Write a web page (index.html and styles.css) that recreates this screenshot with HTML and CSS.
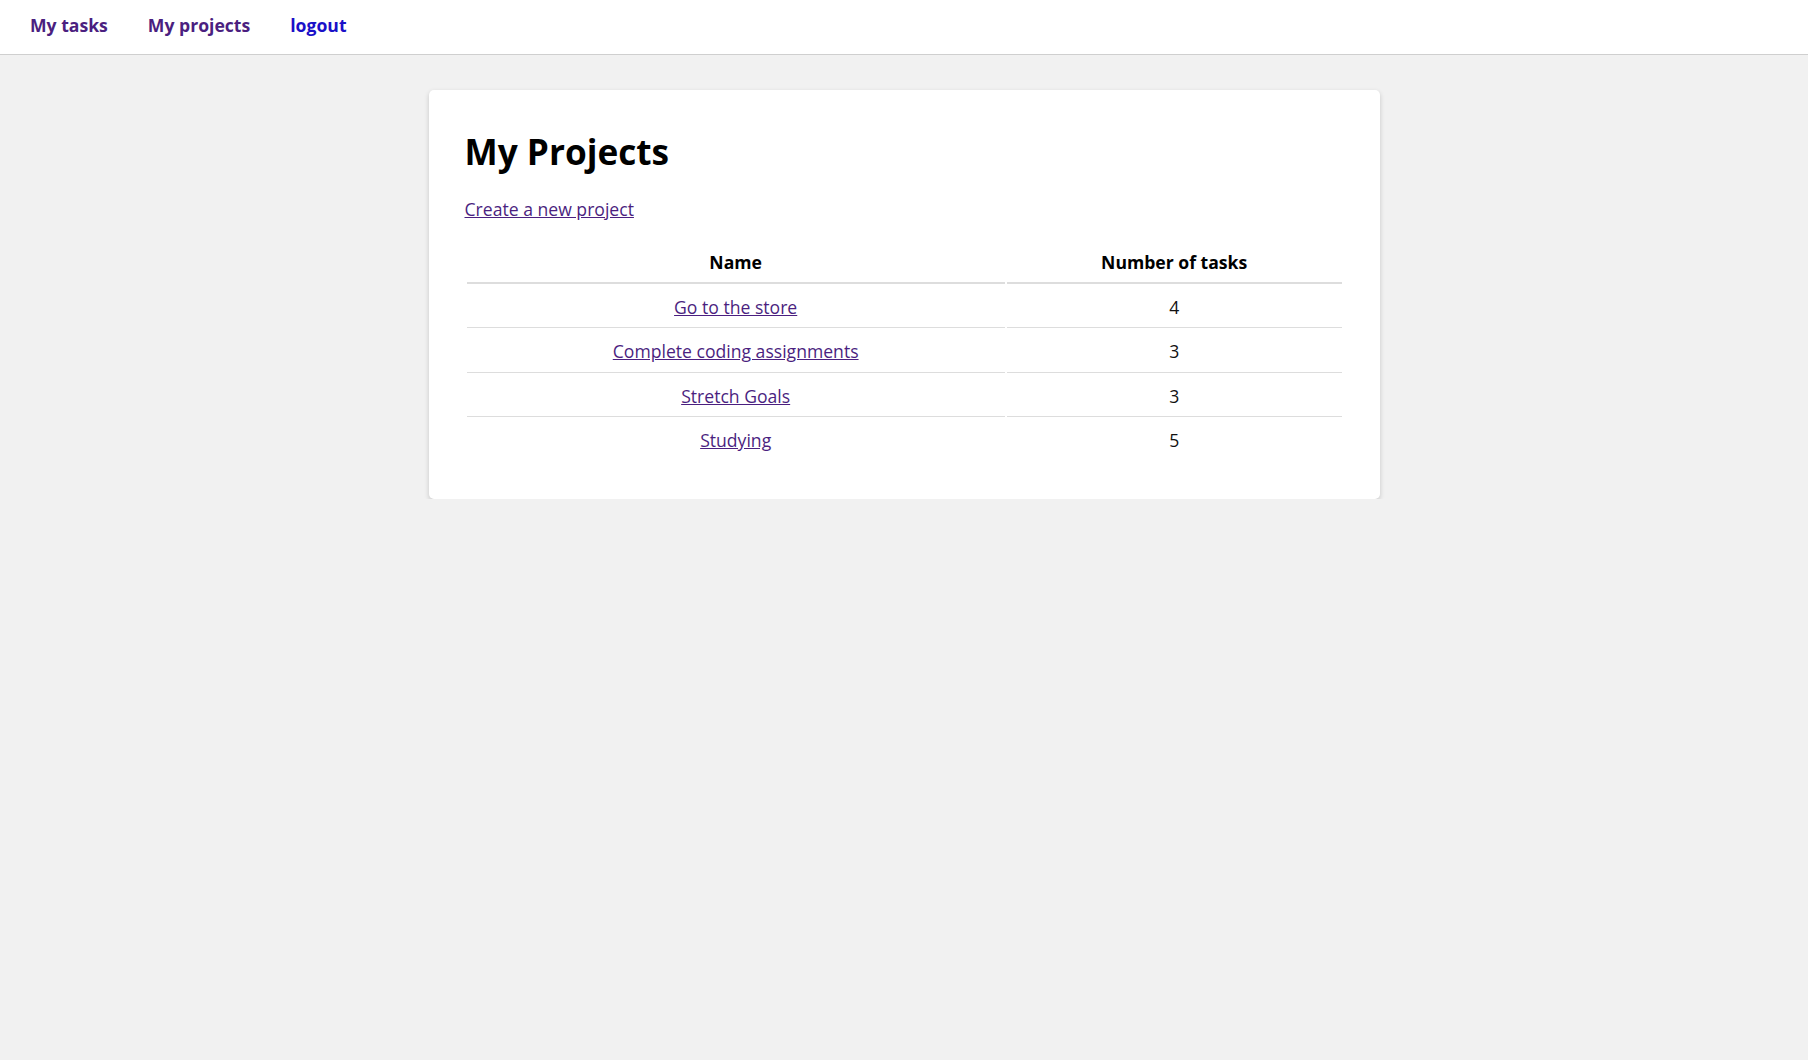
FILE: index.html
```html
<!DOCTYPE html>
<html lang="en">
<head>
<meta charset="utf-8">
<title>My Projects</title>
<link rel="stylesheet" href="styles.css">
</head>
<body>
<nav class="nav">
  <a class="nav-link visited" href="#">My tasks</a>
  <a class="nav-link visited" href="#">My projects</a>
  <a class="nav-link" href="#">logout</a>
</nav>
<main class="card">
  <h1 class="title">My Projects</h1>
  <p class="create"><a class="link" href="#">Create a new project</a></p>
  <table class="projects">
    <thead>
      <tr><th>Name</th><th>Number of tasks</th></tr>
    </thead>
    <tbody>
      <tr><td><a class="link" href="#">Go to the store</a></td><td>4</td></tr>
      <tr><td><a class="link" href="#">Complete coding assignments</a></td><td>3</td></tr>
      <tr><td><a class="link" href="#">Stretch Goals</a></td><td>3</td></tr>
      <tr><td><a class="link" href="#">Studying</a></td><td>5</td></tr>
    </tbody>
  </table>
</main>
</body>
</html>
```
FILE: styles.css
```css
html, body {
  margin: 0;
  padding: 0;
}
body {
  background: #f1f1f1;
  font-family: "Open Sans", "Liberation Sans", sans-serif;
  font-size: 17.6px;
  color: #111;
}
.nav {
  display: flex;
  align-items: center;
  gap: 40px;
  padding: 0 30px 5px;
  box-sizing: border-box;
  height: 55px;
  background: #fff;
  border-bottom: 1px solid #cfcfcf;
}
.nav-link {
  font-weight: 700;
  font-size: 17.6px;
  color: #1a10c8;
  text-decoration: none;
}
.nav-link.visited {
  color: #4b1f80;
}
.card {
  width: 951px;
  box-sizing: border-box;
  margin: 35px auto 0;
  padding: 37px 36px 36px;
  background: #fff;
  border-radius: 5px;
  box-shadow: 0 2px 5px rgba(0, 0, 0, 0.18);
}
.title {
  margin: 0 0 22px;
  font-size: 2em;
  font-weight: 700;
  color: #000;
}
.create {
  margin: 0 0 18px;
}
.link {
  color: #4b1f80;
}
.projects {
  width: 100%;
  border-spacing: 2px;
}
.projects th {
  padding: 0.5em 0.5em 0.45em;
  font-weight: 700;
  color: #000;
  border-bottom: 2px solid #ddd;
}
.projects td {
  padding: 0.5em;
  text-align: center;
  border-bottom: 1px solid #ddd;
}
.projects tbody tr:last-child td {
  border-bottom: none;
}
```
